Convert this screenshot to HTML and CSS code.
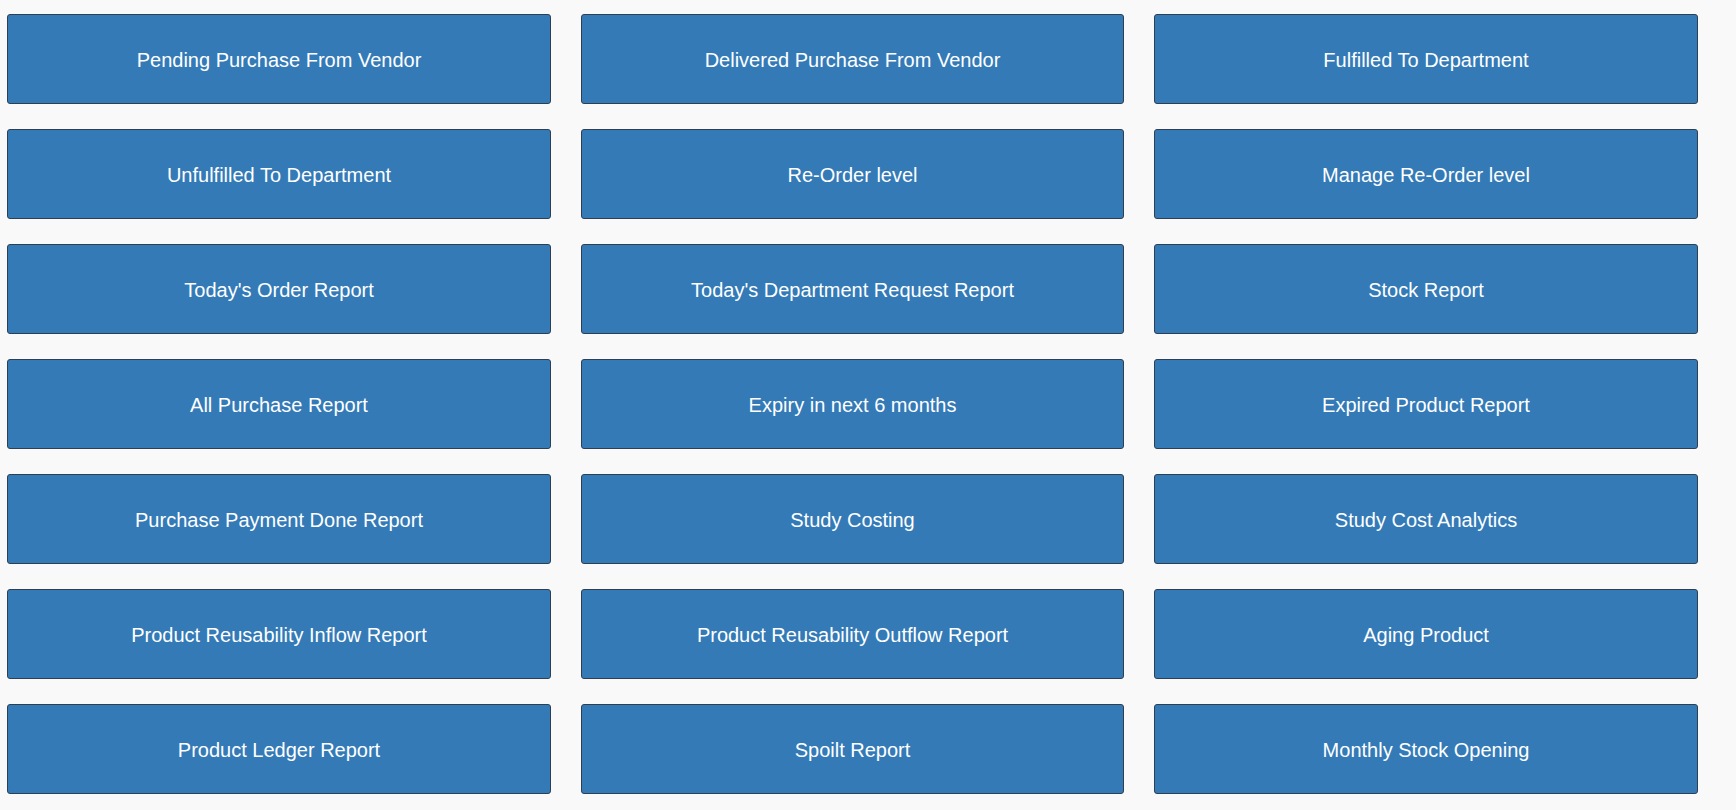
FILE: index.html
```html
<!DOCTYPE html>
<html lang="en">
<head>
<meta charset="UTF-8">
<meta name="viewport" content="width=device-width, initial-scale=1.0">
<title>Reports</title>
<link rel="stylesheet" href="styles.css">
</head>
<body>
<div class="report-grid">
    <button class="report-btn">Pending Purchase From Vendor</button>
    <button class="report-btn">Delivered Purchase From Vendor</button>
    <button class="report-btn">Fulfilled To Department</button>

    <button class="report-btn">Unfulfilled To Department</button>
    <button class="report-btn">Re-Order level</button>
    <button class="report-btn">Manage Re-Order level</button>

    <button class="report-btn">Today's Order Report</button>
    <button class="report-btn">Today's Department Request Report</button>
    <button class="report-btn">Stock Report</button>

    <button class="report-btn">All Purchase Report</button>
    <button class="report-btn">Expiry in next 6 months</button>
    <button class="report-btn">Expired Product Report</button>

    <button class="report-btn">Purchase Payment Done Report</button>
    <button class="report-btn">Study Costing</button>
    <button class="report-btn">Study Cost Analytics</button>

    <button class="report-btn">Product Reusability Inflow Report</button>
    <button class="report-btn">Product Reusability Outflow Report</button>
    <button class="report-btn">Aging Product</button>

    <button class="report-btn">Product Ledger Report</button>
    <button class="report-btn">Spoilt Report</button>
    <button class="report-btn">Monthly Stock Opening</button>
</div>
</body>
</html>
```

FILE: styles.css
```css
body {
    font-family: "Liberation Sans", Arial, sans-serif;
    background-color: #f9f9f9;
    margin: 0;
    padding: 0;
}

.report-grid {
    display: grid;
    grid-template-columns: 544px 543px 544px;
    column-gap: 30px;
    row-gap: 25px;
    padding: 14px 0 0 7px;
}

.report-btn {
    height: 90px;
    padding: 3px 0 0 0;
    background-color: #337ab7;
    color: #fff;
    border: 1px solid #2f3f52;
    border-radius: 3px;
    font-family: inherit;
    font-size: 20px;
    cursor: pointer;
}

.report-btn:hover {
    background-color: #286090;
}
```
